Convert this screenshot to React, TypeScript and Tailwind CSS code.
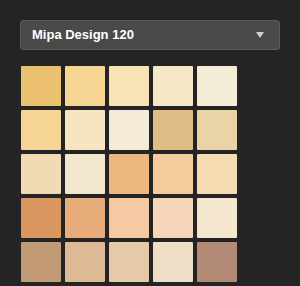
import React from "react";

const swatches = [
  ["#ebc06f", "#f5d591", "#f7e3b5", "#f5e6c5", "#f3ecd7"],
  ["#f7d597", "#f6e5c0", "#f4ecd8", "#e0bd85", "#ead4a6"],
  ["#f0dbb4", "#f2e6ce", "#ecb880", "#f5cc9e", "#f7dbb3"],
  ["#d9965f", "#e9ad7b", "#f5caa3", "#f5d6b8", "#f5e6d0"],
  ["#c29a76", "#deb995", "#e5c9a8", "#eddec5", "#b38a76"],
];

export default function App() {
  return (
    <div className="w-[300px] h-[286px] bg-[#242424] pt-5 px-5 overflow-hidden font-['Liberation_Sans',Arial,sans-serif]">
      <div className="h-[30px] flex items-center justify-between pl-[11px] pr-[15px] rounded-[3px] border border-[#5c5c5c] bg-[#4a4a4a]">
        <span className="text-[13px] font-bold text-white">Mipa Design 120</span>
        <svg width="8" height="6" viewBox="0 0 8 6">
          <path d="M0 0 L8 0 L4 6 Z" fill="#cfcfcf" />
        </svg>
      </div>
      <div className="mt-4 ml-px grid grid-cols-[repeat(5,40px)] gap-1">
        {swatches.flat().map((c, i) => (
          <div key={i} className="w-10 h-10 rounded-[1px]" style={{ backgroundColor: c }} />
        ))}
      </div>
    </div>
  );
}
